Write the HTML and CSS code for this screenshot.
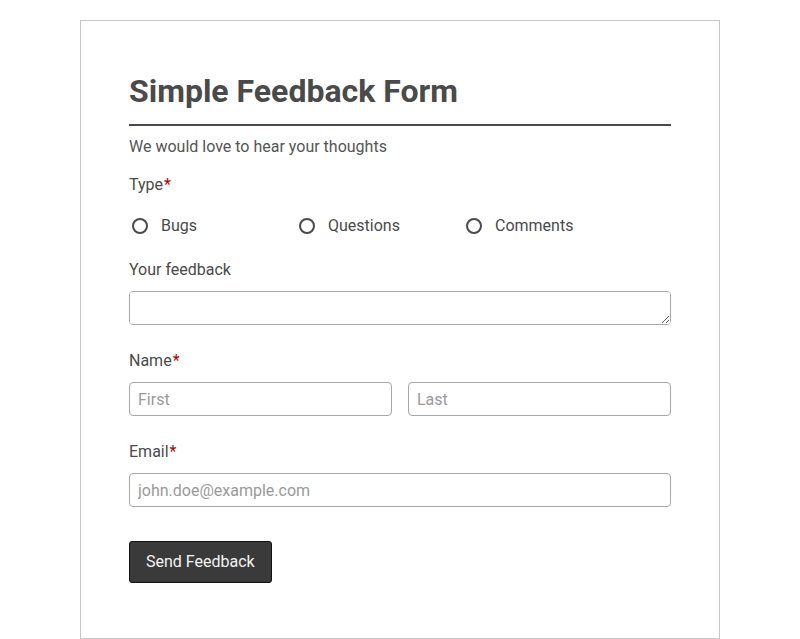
FILE: index.html
```html
<!DOCTYPE html>
<html lang="en">
<head>
    <meta charset="UTF-8">
    <meta name="viewport" content="width=device-width, initial-scale=1.0">
    <title>Simple Feedback Form</title>
    <link rel="stylesheet" href="styles.css">
</head>
<body>
    <div class="container">
        <h1>Simple Feedback Form</h1>
        <p class="sub">We would love to hear your thoughts</p>
        <form>
            <div class="field">
                <label>Type<span class="req">*</span></label>
                <div class="radios">
                    <label class="radio"><input type="radio" name="type" value="bugs"><span class="dot"></span>Bugs</label>
                    <label class="radio"><input type="radio" name="type" value="questions"><span class="dot"></span>Questions</label>
                    <label class="radio"><input type="radio" name="type" value="comments"><span class="dot"></span>Comments</label>
                </div>
            </div>
            <div class="field">
                <label for="feedback">Your feedback</label>
                <textarea id="feedback"></textarea>
            </div>
            <div class="field">
                <label>Name<span class="req">*</span></label>
                <div class="pair">
                    <input type="text" placeholder="First">
                    <input type="text" placeholder="Last">
                </div>
            </div>
            <div class="field">
                <label for="email">Email<span class="req">*</span></label>
                <input type="email" id="email" placeholder="john.doe@example.com">
            </div>
            <button type="submit" class="send">Send Feedback</button>
        </form>
    </div>
</body>
</html>
```

FILE: styles.css
```css
*, *:before, *:after {box-sizing: border-box;}
* {margin: 0; padding: 0;}
html, body {background: #fff; color: #4a4a4a; font-family: 'Roboto', 'Liberation Sans', sans-serif; font-size: 16px; line-height: 24px;}
.container {width: 640px; margin: 20px auto 0; padding: 48px 48px 55px; border: 1px solid #c8c8c8;}
h1 {font-size: 32px; line-height: 44px; font-weight: 700; color: #4a4a4a; padding-bottom: 11px; border-bottom: 2px solid #4a4a4a;}
.sub {margin-top: 9px; color: #555;}
form {display: flex; flex-direction: column;}
.field {display: flex; flex-direction: column; gap: 9px; margin-top: 14px;}
.field + .field {margin-top: 24px;}
.field:first-child {gap: 10px;}
.field:first-child + .field {margin-top: 20px;}
.req {color: #b30000; margin-left: 1px;}
.radios {display: flex; padding: 7px 0 0;}
.radio {display: flex; align-items: center; width: 167px; cursor: pointer;}
.radio input {display: none;}
.dot {width: 16px; height: 16px; border: 2px solid #4a4a4a; border-radius: 50%; margin: 0 13px 0 3px;}
.radio input:checked + .dot {background: radial-gradient(#4a4a4a 3px, transparent 4px);}
textarea, input[type=text], input[type=email] {display: block; width: 100%; height: 34px; padding: 5px 8px; border: 1px solid #a8a8a8; border-radius: 4px; font: inherit; color: #4a4a4a; background: #fff; outline: none;}
textarea {resize: vertical;}
::placeholder {color: #9a9a9a;}
.pair {display: flex; gap: 16px;}
.send {align-self: flex-start; margin-top: 34px; padding: 8px 16px; line-height: 23px; font: inherit; background: #3a3a3a; color: #f4f4f4; border: 1px solid #111; border-radius: 3px; cursor: pointer;}
.send:hover {background: #222;}
```
